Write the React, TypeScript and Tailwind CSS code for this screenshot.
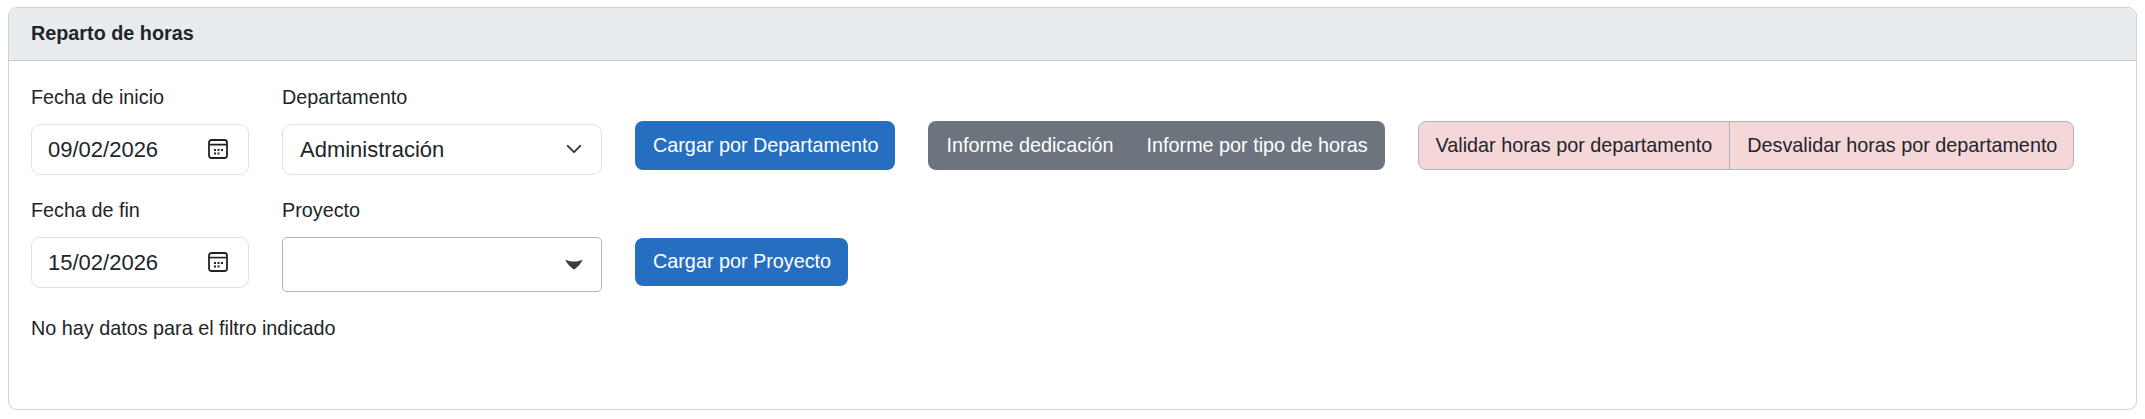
const font = "font-['Liberation_Sans',Arial,sans-serif]";

const CalendarIcon = () => (
  <svg width="20" height="20" viewBox="0 0 20 20" fill="none" className="shrink-0">
    <rect x="1" y="1" width="18" height="18" rx="2.5" stroke="#222" strokeWidth="1.8" />
    <path d="M1.500 5.600h17" stroke="#222" strokeWidth="1.600" />
    <path d="M6 10h2v2H6zM9.500 10h2v2h-2zM13 10h2v2h-2zM6 13.500h2v2H6zM9.500 13.500h2v2h-2z" fill="#222" />
  </svg>
);

const Chevron = () => (
  <svg width="20" height="20" viewBox="0 0 16 16" fill="none" className="shrink-0">
    <path d="M3 5.5l5 5 5-5" stroke="#343a40" strokeWidth="1.6" strokeLinecap="round" strokeLinejoin="round" />
  </svg>
);

const Caret = () => (
  <svg width="20" height="13" viewBox="0 0 20 13" className="shrink-0">
    <path d="M1.500 1.500c2.500 1.500 5 2 8.500 2s6-.5 8.500-2c-.6 3-4.500 7.500-8.500 10-4-2.500-7.900-7-8.500-10z" fill="#3d3d3d" />
  </svg>
);

const DateField = ({ label, value }: { label: string; value: string }) => (
  <div className="w-[218px] shrink-0">
    <div className="h-[40px] leading-[27px]">{label}</div>
    <div className="flex h-[51px] items-center justify-between rounded-[9px] border border-[#dee2e6] pb-[1px] pl-[16px] pr-[20px] text-[22px]">
      <span>{value}</span>
      <CalendarIcon />
    </div>
  </div>
);

export default function App() {
  return (
    <div className={`${font} h-[419px] bg-white pt-[7px] pl-[8px] pr-[8px] text-[19.8px] text-[#212529]`}>
      <div className="h-[403px] overflow-hidden rounded-[9px] border border-[#cfd1d3]">
        <div className="flex h-[53px] items-center border-b border-[#c5c8cb] bg-[#e9ecef] pl-[22px] font-bold">
          Reparto de horas
        </div>
        <div className="px-[22px] pt-[23px]">
          <div className="flex">
            <DateField label="Fecha de inicio" value="09/02/2026" />
            <div className="ml-[33px] w-[320px] shrink-0">
              <div className="h-[40px] leading-[27px]">Departamento</div>
              <div className="flex h-[51px] items-center justify-between rounded-[9px] border border-[#dee2e6] pb-[1px] pl-[17px] pr-[17px] text-[22px]">
                <span>Administración</span>
                <Chevron />
              </div>
            </div>
            <div className="mt-[37px] ml-[33px] flex h-[49px] items-center rounded-[8px] bg-[#266fc0] pl-[18px] pr-[17px] text-white">
              Cargar por Departamento
            </div>
            <div className="mt-[37px] ml-[33px] flex h-[49px] items-center gap-[33px] rounded-[8px] bg-[#6c757d] pl-[18px] pr-[17px] text-white">
              <span>Informe dedicación</span>
              <span>Informe por tipo de horas</span>
            </div>
            <div className="mt-[37px] ml-[33px] flex h-[49px] items-center rounded-[8px] border border-[#adb5bd] bg-[#f5d7da]">
              <span className="flex h-full items-center border-r border-[#adb5bd] px-[17px]">Validar horas por departamento</span>
              <span className="flex h-full items-center pl-[17px] pr-[16px]">Desvalidar horas por departamento</span>
            </div>
          </div>
          <div className="mt-[22px] flex">
            <DateField label="Fecha de fin" value="15/02/2026" />
            <div className="ml-[33px] w-[320px] shrink-0">
              <div className="h-[40px] leading-[27px]">Proyecto</div>
              <div className="flex h-[55px] items-center justify-end rounded-[5px] border border-[#b4b4b4] pr-[17px]">
                <Caret />
              </div>
            </div>
            <div className="mt-[41px] ml-[33px] flex h-[48px] items-center self-start rounded-[8px] bg-[#266fc0] pl-[18px] pr-[17px] text-white">
              Cargar por Proyecto
            </div>
          </div>
          <div className="mt-[23px] leading-[27px]">No hay datos para el filtro indicado</div>
        </div>
      </div>
    </div>
  );
}
